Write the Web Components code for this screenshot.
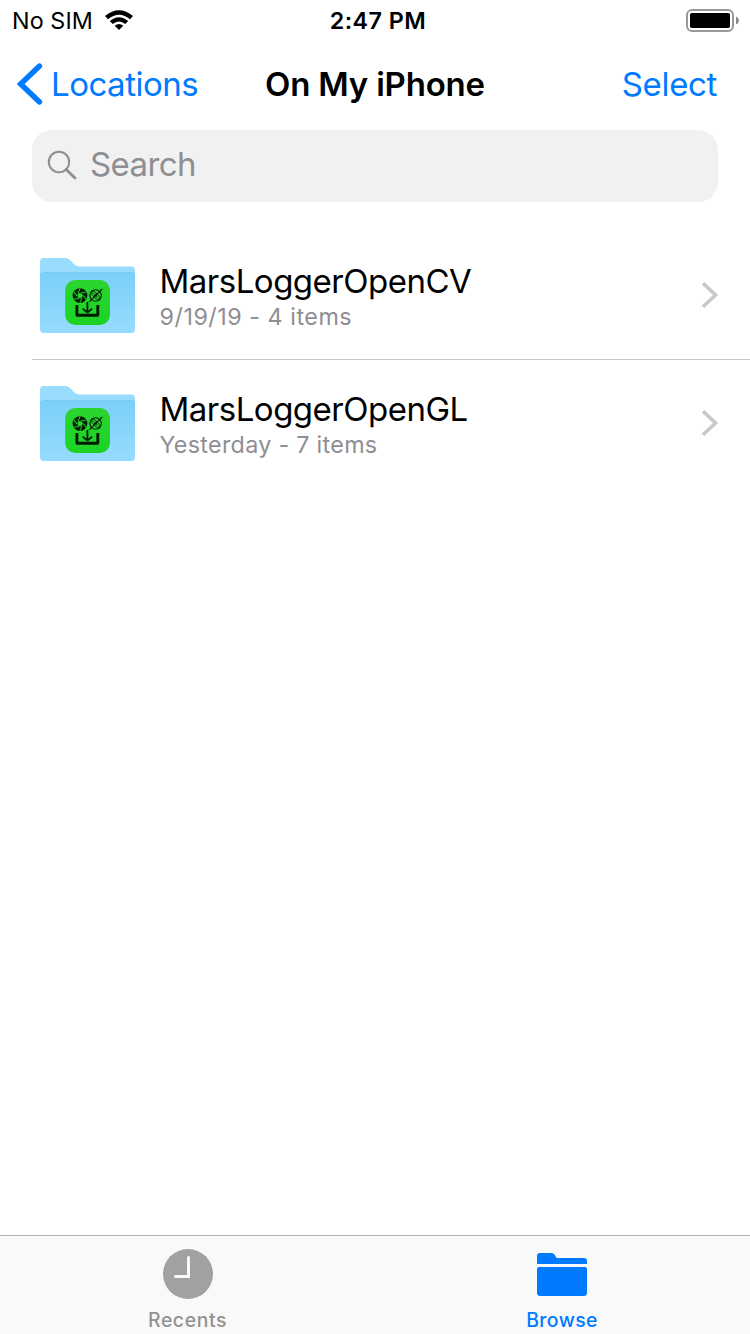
<!DOCTYPE html>
<html lang="en">
<head>
<meta charset="utf-8">
<title>Files</title>
<style>
    html, body {
        margin: 0;
        height: 100%;
    }

    body {
        --blue: #007aff;
        --gray: #8e8e93;
        background: #fff;
        color: #000;
        font-family: Inter, "Liberation Sans", sans-serif;
        font-size: 33px;
    }
</style>
</head>
<body>
<files-app>
    <status-bar slot="top" carrier="No SIM" time="2:47 PM"></status-bar>
    <nav-bar slot="top">
        <span slot="back">Locations</span>
        <span slot="title">On My iPhone</span>
        <span slot="action">Select</span>
    </nav-bar>
    <search-field slot="top">Search</search-field>
    <folder-row name="MarsLoggerOpenCV" style="--info-spacing: 0.52px">9/19/19 - 4 items</folder-row>
    <folder-row name="MarsLoggerOpenGL">Yesterday - 7 items</folder-row>
    <tab-bar slot="bottom">
        <tab-item icon="clock">Recents</tab-item>
        <tab-item icon="folder" active>Browse</tab-item>
    </tab-bar>
</files-app>

<script>
class FilesApp extends HTMLElement{
    constructor(){
        super();

        const shadowRoot = this.attachShadow({mode: 'open'});

        shadowRoot.innerHTML = `
            <style>
                :host {
                    display: flex;
                    flex-direction: column;
                    height: 1334px;
                    overflow: hidden;
                }

                main {
                    flex: 1;
                    padding-top: 30px;
                }
            </style>
            <slot name="top"></slot>
            <main><slot></slot></main>
            <slot name="bottom"></slot>
        `;
    }
}

class StatusBar extends HTMLElement{
    constructor(){
        super();

        const shadowRoot = this.attachShadow({mode: 'open'});

        shadowRoot.innerHTML = `
            <style>
                :host {
                    display: grid;
                    grid-template-columns: 1fr auto 1fr;
                    align-items: center;
                    height: 41px;
                    padding: 0 11px 0 12px;
                    font-size: 23.3px;
                }

                .left {
                    display: flex;
                    align-items: center;
                    gap: 11px;
                }

                .carrier {
                    letter-spacing: 0.1px;
                }

                .time {
                    font-weight: 600;
                    letter-spacing: 0.45px;
                    padding-left: 5px;
                }

                svg {
                    display: block;
                }

                .battery {
                    justify-self: end;
                }
            </style>
            <div class="left">
                <span class="carrier">${this.getAttribute('carrier')}</span>
                <svg width="30" height="22" viewBox="0 0 30 22">
                    <path d="M1 6Q15-5.700 29 6L26 9.300Q15 .100 4 9.300Z"/>
                    <path d="M5.800 11.100Q15 3.500 24.200 11.100L21.300 14Q15 8.900 8.700 14Z"/>
                    <path d="M10.700 15.700Q15 12.300 19.300 15.700L15 20Z"/>
                </svg>
            </div>
            <span class="time">${this.getAttribute('time')}</span>
            <svg class="battery" width="53" height="23" viewBox="0 0 53 23">
                <rect x="1" y="1" width="46" height="21" rx="5" fill="none" stroke="#999" stroke-width="2"/>
                <rect x="4" y="4" width="40" height="15" rx="1.8"/>
                <path d="M50 7.5Q53 8.8 53 11.5T50 15.5Z" fill="#888"/>
            </svg>
        `;
    }
}

class NavBar extends HTMLElement{
    constructor(){
        super();

        const shadowRoot = this.attachShadow({mode: 'open'});

        shadowRoot.innerHTML = `
            <style>
                :host {
                    display: grid;
                    grid-template-columns: 1fr auto 1fr;
                    align-items: center;
                    height: 89px;
                    padding: 0 33px 3px 17px;
                    box-sizing: border-box;
                }

                .back, .action {
                    color: var(--blue);
                }

                .back {
                    display: flex;
                    align-items: center;
                    gap: 8px;
                    letter-spacing: -0.5px;
                }

                .title {
                    font-weight: 600;
                    letter-spacing: -0.2px;
                    padding-left: 16px;
                }

                .action {
                    text-align: right;
                    letter-spacing: -0.35px;
                }
            </style>
            <div class="back">
                <svg width="26" height="42" viewBox="0 0 26 42">
                    <path d="M22.500 3L3.700 21L22.500 39" fill="none" stroke="currentColor" stroke-width="5.400" stroke-linecap="round"/>
                </svg>
                <slot name="back"></slot>
            </div>
            <div class="title"><slot name="title"></slot></div>
            <div class="action"><slot name="action"></slot></div>
        `;
    }
}

class SearchField extends HTMLElement{
    constructor(){
        super();

        const shadowRoot = this.attachShadow({mode: 'open'});

        shadowRoot.innerHTML = `
            <style>
                :host {
                    display: flex;
                    align-items: center;
                    gap: 13px;
                    height: 72px;
                    margin: 0 32px;
                    padding: 0 15px 4px;
                    box-sizing: border-box;
                    border-radius: 20px;
                    background: #f1f1f1;
                    color: var(--gray);
                    letter-spacing: -0.6px;
                }

                svg {
                    margin-top: 1px;
                }
            </style>
            <svg width="30" height="30" viewBox="0 0 30 30" fill="none" stroke="currentColor">
                <circle cx="12" cy="12" r="10.2" stroke-width="2"/>
                <path d="M19.2 19.4L28 28" stroke-width="2.8" stroke-linecap="round"/>
            </svg>
            <slot></slot>
        `;
    }
}

class AppFolder extends HTMLElement{
    constructor(){
        super();

        const shadowRoot = this.attachShadow({mode: 'open'});

        shadowRoot.innerHTML = `
            <style>
                :host, svg {
                    display: block;
                }
            </style>
            <svg width="95" height="75" viewBox="0 0 95 75">
                <defs>
                    <linearGradient id="front" x1="0" y1="0" x2="0" y2="1">
                        <stop offset="0" stop-color="#7bd0f8"/>
                        <stop offset="1" stop-color="#97dcfe"/>
                    </linearGradient>
                    <linearGradient id="app" x1="0" y1="0" x2="0" y2="1">
                        <stop offset="0" stop-color="#2bd52f"/>
                        <stop offset="1" stop-color="#1bd324"/>
                    </linearGradient>
                </defs>
                <path d="M0 20V4Q0 0 4 0H25Q28 0 30 2L34 6Q36.500 8.500 40 8.500H91Q95 8.500 95 12.500V20Z" fill="#98ddfd"/>
                <path d="M0 18.500Q0 14.500 4 14.500H91Q95 14.500 95 18.500V71Q95 75 91 75H4Q0 75 0 71Z" fill="url(#front)"/>
                <path d="M0 18.500Q0 14.500 4 14.500H91Q95 14.500 95 18.500" fill="none" stroke="#74c9f1" stroke-width=".8"/>
                <rect x="25.200" y="22" width="44.800" height="45" rx="10" fill="url(#app)"/>
                <!-- shutter -->
                <g transform="translate(40 37.600)">
                    <circle r="5" fill="none" stroke="#042006" stroke-width="4.800"/>
                    <g stroke="#25d52b" stroke-width=".9">
                        <path id="blade" d="M.8 -2.700L6.400 -3.600"/>
                        <use href="#blade" transform="rotate(60)"/>
                        <use href="#blade" transform="rotate(120)"/>
                        <use href="#blade" transform="rotate(180)"/>
                        <use href="#blade" transform="rotate(240)"/>
                        <use href="#blade" transform="rotate(300)"/>
                    </g>
                </g>
                <!-- gyroscope -->
                <g transform="translate(55.600 37.500)" fill="none" stroke="#042006">
                    <circle r="5.700" stroke-width="1.100"/>
                    <ellipse rx="6" ry="2.200" stroke-width=".8" transform="rotate(45)"/>
                    <path d="M-6.500 6.300L6.600 -6.500" stroke-width="1.100"/>
                    <path d="M-3.800 -3.800L3.800 3.800" stroke-width=".6"/>
                    <circle r="1.300" fill="#042006" stroke="none"/>
                </g>
                <g fill="none" stroke="#031b05" stroke-linejoin="round">
                    <path d="M36.900 47V57.300H57.800V47" stroke-width="2.900"/>
                    <path d="M47.400 44V54M42.700 50.600L47.400 54.500L52.200 50.600" stroke-width="1.800"/>
                </g>
            </svg>
        `;
    }
}

class FolderRow extends HTMLElement{
    constructor(){
        super();

        const shadowRoot = this.attachShadow({mode: 'open'});

        shadowRoot.innerHTML = `
            <style>
                :host {
                    display: flex;
                    align-items: center;
                    height: 128px;
                    margin-left: 32px;
                    padding: 0 31px 0 8px;
                    box-sizing: border-box;
                    border-bottom: 1px solid #c8c7cc;
                }

                :host(:last-of-type) {
                    border-bottom-color: transparent;
                }

                .text {
                    flex: 1;
                    padding: 1px 0 0 24.5px;
                }

                .name {
                    line-height: 40px;
                    letter-spacing: -0.5px;
                }

                .info {
                    line-height: 31px;
                    font-size: 23.3px;
                    color: var(--gray);
                    letter-spacing: var(--info-spacing, 0.3px);
                }

                .chevron {
                    margin-bottom: 2px;
                }
            </style>
            <app-folder></app-folder>
            <div class="text">
                <div class="name">${this.getAttribute('name')}</div>
                <div class="info"><slot></slot></div>
            </div>
            <svg class="chevron" width="18" height="28" viewBox="0 0 18 28">
                <path d="M2 2.200L14.500 14L2 25.800" fill="none" stroke="#c7c7cc" stroke-width="3.600"/>
            </svg>
        `;
    }
}

class TabBar extends HTMLElement{
    constructor(){
        super();

        const shadowRoot = this.attachShadow({mode: 'open'});

        shadowRoot.innerHTML = `
            <style>
                :host {
                    display: grid;
                    grid-template-columns: 1fr 1fr;
                    height: 99px;
                    box-sizing: border-box;
                    border-top: 1px solid #b0b0b0;
                    background: #f9f9f9;
                }
            </style>
            <slot></slot>
        `;
    }
}

class TabItem extends HTMLElement{
    constructor(){
        super();

        const shadowRoot = this.attachShadow({mode: 'open'});

        shadowRoot.innerHTML = `
            <style>
                :host {
                    display: flex;
                    flex-direction: column;
                    align-items: center;
                    padding-top: 13px;
                    font-size: 19.4px;
                    font-weight: 500;
                    line-height: 24px;
                    letter-spacing: 0.6px;
                    color: #929292;
                }

                :host([active]) {
                    color: var(--blue);
                    letter-spacing: 0.4px;
                    padding-right: 1px;
                }

                svg {
                    display: block;
                    margin-bottom: 9px;
                }
            </style>
            ${this.icon(this.getAttribute('icon'))}
            <span><slot></slot></span>
        `;
    }

    icon(name) {
        switch(name){
            case 'clock':
                return `
                    <svg width="50" height="50" viewBox="0 0 50 50">
                        <circle cx="25" cy="25" r="25" fill="#a1a1a1"/>
                        <path d="M25.500 8.500V27.500H12.500" fill="none" stroke="#f9f9f9" stroke-width="3" stroke-linecap="round"/>
                    </svg>
                `;
            case 'folder':
                return `
                    <svg width="50" height="50" viewBox="0 0 50 50" fill="currentColor">
                        <path d="M0 15V7Q0 4 3 4H14.500Q16.500 4 17.500 5.500L19.500 9H47Q50 9 50 12V15Z"/>
                        <path d="M0 20Q0 18 2 18H48Q50 18 50 20V44Q50 47 47 47H3Q0 47 0 44Z"/>
                    </svg>
                `;
        }
    }
}

window.customElements.define('files-app', FilesApp);
window.customElements.define('status-bar', StatusBar);
window.customElements.define('nav-bar', NavBar);
window.customElements.define('search-field', SearchField);
window.customElements.define('app-folder', AppFolder);
window.customElements.define('folder-row', FolderRow);
window.customElements.define('tab-bar', TabBar);
window.customElements.define('tab-item', TabItem);
</script>
</body>
</html>
